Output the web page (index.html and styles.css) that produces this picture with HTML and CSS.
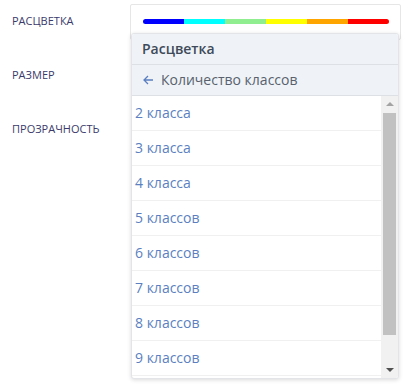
FILE: index.html
```html
<!DOCTYPE html>
<html>
<head>
<meta charset="utf-8">
<link rel="stylesheet" href="styles.css">
</head>
<body>
<div class="form">
  <div class="row">
    <div class="label">РАСЦВЕТКА</div>
    <div class="control">
      <div class="select">
        <div class="ramp">
          <span class="c1"></span><span class="c2"></span><span class="c3"></span><span class="c4"></span><span class="c5"></span><span class="c6"></span>
        </div>
      </div>
      <div class="menu">
        <div class="menu-title">Расцветка</div>
        <div class="menu-back">
          <svg width="11" height="10" viewBox="0 0 11 10"><path d="M5 1 L1 5 L5 9 M1 5 H10" fill="none" stroke="#5b7fc0" stroke-width="1.3"/></svg>
          <span>Количество классов</span>
        </div>
        <div class="list">
          <div class="items">
            <div class="item">2 класса</div>
            <div class="item">3 класса</div>
            <div class="item">4 класса</div>
            <div class="item">5 классов</div>
            <div class="item">6 классов</div>
            <div class="item">7 классов</div>
            <div class="item">8 классов</div>
            <div class="item">9 классов</div>
          </div>
          <div class="scrollbar">
            <div class="arrow up"></div>
            <div class="track"><div class="thumb"></div></div>
            <div class="arrow down"></div>
          </div>
        </div>
      </div>
    </div>
  </div>
  <div class="row"><div class="label">РАЗМЕР</div></div>
  <div class="row"><div class="label">ПРОЗРАЧНОСТЬ</div></div>
</div>
</body>
</html>
```
FILE: styles.css
```css
* { box-sizing: border-box; }
html, body { height: 100%; }
body {
  margin: 0;
  min-height: 387px;
  font-family: "Open Sans", "Noto Sans", sans-serif;
  background: #fff;
}
.form {
  display: flex;
  flex-direction: column;
  padding-top: 4px;
}
.row {
  display: flex;
  height: 54px;
}
.label {
  width: 130px;
  padding-left: 12px;
  padding-top: 9px;
  font-size: 11px;
  line-height: 16px;
  color: #3b3a6b;
}
.control {
  position: relative;
  width: 271px;
}
.select {
  height: 36px;
  border: 1px solid #e6e6e6;
  border-radius: 2px;
  padding: 14px 11px 0 12px;
}
.ramp {
  display: flex;
  height: 5px;
  border-radius: 3px;
  overflow: hidden;
}
.ramp span { flex: 1; }
.c1 { background: #0000ff; }
.c2 { background: #00ffff; }
.c3 { background: #90ee90; }
.c4 { background: #ffff00; }
.c5 { background: #ffa500; }
.c6 { background: #ff0000; }
.menu {
  position: absolute;
  left: 1px;
  top: 29px;
  width: 268px;
  background: #fff;
  border: 1px solid #e2e4e7;
  border-radius: 3px;
  box-shadow: 0 1px 4px rgba(0,0,0,0.15);
  overflow: hidden;
}
.menu-title {
  height: 31px;
  background: #eff3f7;
  border-bottom: 1px solid #dde1e5;
  padding: 5px 10px 0;
  font-size: 14px;
  font-weight: 600;
  color: #3e4a59;
}
.menu-back {
  height: 31px;
  background: #eff3f7;
  border-bottom: 1px solid #dde1e5;
  display: flex;
  align-items: center;
  gap: 7px;
  padding: 0 10px 1px 11px;
  font-size: 14px;
  color: #58616d;
}
.list {
  display: flex;
  height: 282px;
}
.items {
  flex: 1;
  overflow: hidden;
}
.item {
  height: 35px;
  border-bottom: 1px solid #f0f0f0;
  padding: 7px 0 0 3px;
  font-size: 14px;
  color: #5b7fc0;
}
.scrollbar {
  width: 17px;
  background: #f1f1f1;
  display: flex;
  flex-direction: column;
}
.arrow { height: 17px; position: relative; }
.arrow::after {
  content: "";
  position: absolute;
  left: 5px;
  width: 0; height: 0;
  border-left: 4px solid transparent;
  border-right: 4px solid transparent;
}
.arrow.up::after { top: 6px; border-bottom: 4px solid #a3a3a3; }
.arrow.down::after { top: 7px; border-top: 4px solid #505050; }
.track { flex: 1; padding: 0 2px; display: flex; flex-direction: column; }
.thumb { height: 222px; background: #c1c1c1; }
```
